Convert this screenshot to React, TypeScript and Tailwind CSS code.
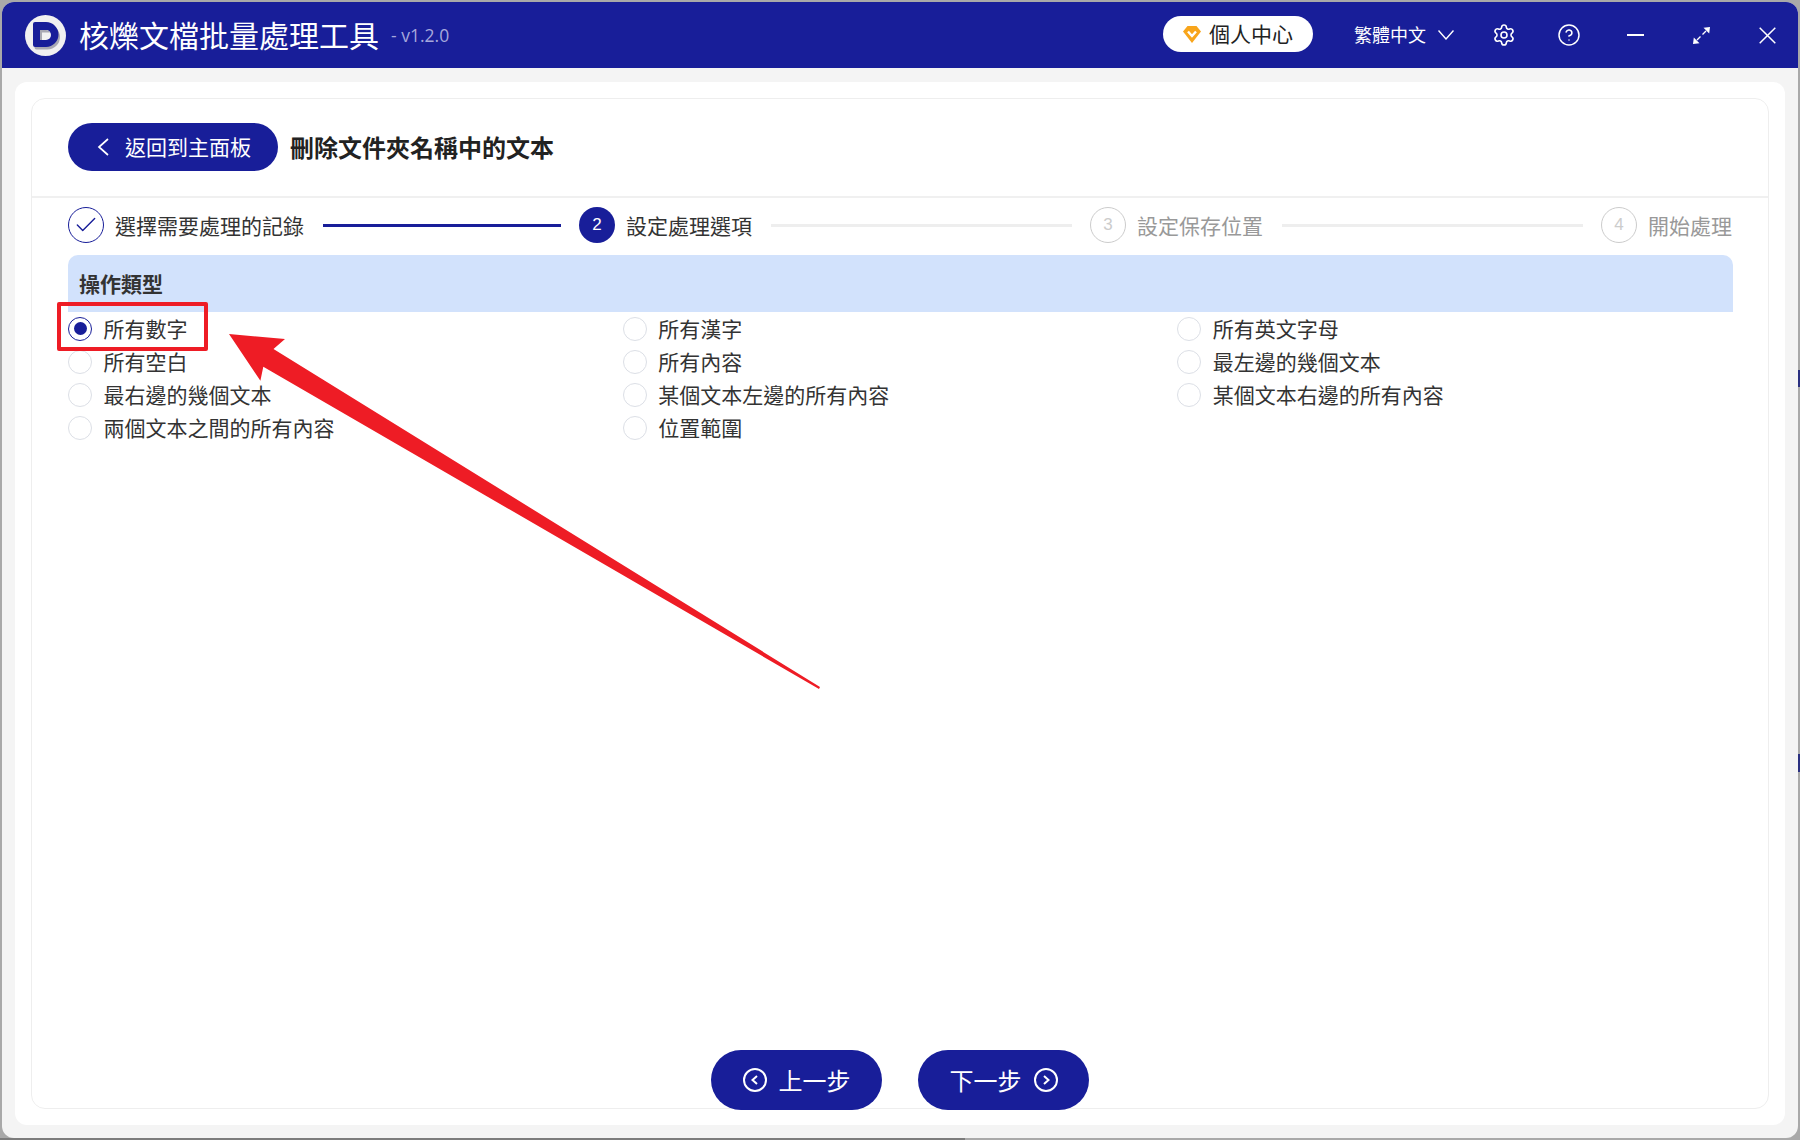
import { Settings, CircleHelp, Check } from "lucide-react";

const cjk = "font-['Noto_Sans_CJK_TC','Noto_Sans',sans-serif]";

const options = [
  "所有數字", "所有漢字", "所有英文字母",
  "所有空白", "所有內容", "最左邊的幾個文本",
  "最右邊的幾個文本", "某個文本左邊的所有內容", "某個文本右邊的所有內容",
  "兩個文本之間的所有內容", "位置範圍",
];

function Logo() {
  return (
    <svg width="41" height="41" viewBox="0 0 41 41">
      <circle cx="20.5" cy="20.5" r="20.5" fill="#f1f1f1" />
      <path d="M10 8h11a12.5 12.5 0 0 1 0 25H10a2 2 0 0 1-2-2V10a2 2 0 0 1 2-2z" fill="#a8a8b2" transform="translate(1.5 1.5)" />
      <path d="M10 7h11a12.5 12.5 0 0 1 0 25H10a2 2 0 0 1-2-2V9a2 2 0 0 1 2-2z" fill="#181e99" />
      <path d="M15 15h6a4.6 4.6 0 0 1 0 10h-6z" fill="#f1f1f1" />
      <path d="M15 15h6a4.6 4.6 0 0 1 4 2.4h-8v7.600h-2z" fill="#a8a8b2" />
    </svg>
  );
}

function Diamond() {
  return (
    <svg width="18" height="17" viewBox="0 0 18 17">
      <path d="M4.500 0h9L18 5.500 9 17 0 5.500z" fill="#f8a51b" />
      <path d="M5 5.500l4 4.500 4-4.500" fill="none" stroke="#fff" strokeWidth="2.4" />
    </svg>
  );
}

function Expand() {
  return (
    <svg width="17" height="17" viewBox="0 0 17 17" fill="none" stroke="#fff" strokeWidth="1.4">
      <path d="M17 0l-6.500.8 5.700 5.700z" fill="#fff" stroke="none" />
      <path d="M0 17l.8-6.500 5.700 5.700z" fill="#fff" stroke="none" />
      <path d="M13 4l-3.500 3.500M4 13l3.500-3.500" />
    </svg>
  );
}

function Close() {
  return (
    <svg width="17" height="17" viewBox="0 0 17 17" fill="none" stroke="#fff" strokeWidth="1.5">
      <path d="M.7.7l15.600 15.600M16.300.7L.7 16.300" />
    </svg>
  );
}

function CircleArrow({ right }: { right?: boolean }) {
  return (
    <svg width="24" height="24" viewBox="0 0 24 24" fill="none" stroke="#fff" strokeWidth="2">
      <circle cx="12" cy="12" r="11" />
      <path d={right ? "M10 8l4.500 4-4.500 4" : "M14 8l-4.500 4 4.500 4"} />
    </svg>
  );
}

function Step({ num, label, state }: { num: number; label: string; state: "done" | "active" | "todo" }) {
  return (
    <div className="flex items-center gap-[11px] shrink-0">
      {state === "done" && (
        <div className="w-9 h-9 rounded-full border border-[#181e99] flex items-center justify-center text-[#181e99]">
          <Check size={26} strokeWidth={1.3} />
        </div>
      )}
      {state === "active" && (
        <div className="w-9 h-9 rounded-full bg-[#181e99] text-white text-[17px] flex items-center justify-center font-['Liberation_Sans',sans-serif]">
          {num}
        </div>
      )}
      {state === "todo" && (
        <div className="w-9 h-9 rounded-full border border-[#cccccc] text-[#cccccc] text-[17px] flex items-center justify-center font-['Liberation_Sans',sans-serif]">
          {num}
        </div>
      )}
      <span className={state === "todo" ? "text-[21px] leading-none text-[#999999]" : "text-[21px] leading-none text-[#333333]"}>
        {label}
      </span>
    </div>
  );
}

function Radio({ label, checked }: { label: string; checked?: boolean }) {
  return (
    <label className="flex items-center h-[33px] gap-[11.5px]">
      {checked ? (
        <span className="w-6 h-6 rounded-full border border-[#181e99] flex items-center justify-center">
          <span className="w-[13px] h-[13px] rounded-full bg-[#181e99]" />
        </span>
      ) : (
        <span className="w-6 h-6 rounded-full border border-[#dcdfe6]" />
      )}
      <span className="text-[21px] leading-none text-[#333333]">{label}</span>
    </label>
  );
}

export default function App() {
  return (
    <div className={`${cjk} relative w-[1800px] h-[1140px] overflow-hidden bg-[#a9a9a9] pt-[2px] pl-[2px]`}>
      <div className="w-[1796px] h-[1136px] rounded-[12px] overflow-hidden bg-[#f4f4f4] flex flex-col">
        {/* Title bar */}
        <div className="h-[66px] shrink-0 bg-[#181e99] flex items-center text-white">
          <div className="ml-[23px]">
            <Logo />
          </div>
          <span className="ml-[13px] mb-[2px] text-[30px] leading-none">核爍文檔批量處理工具</span>
          <span className="ml-3 mt-[1px] text-[17.500px] leading-none text-[#a6a8dc] font-['Open_Sans',sans-serif]">- v1.2.0</span>
          <div className="ml-auto flex items-center">
            <div className="w-[150px] h-9 mb-[2px] rounded-full bg-white flex items-center pl-5 gap-2 text-[#222222] text-[21px] leading-none">
              <Diamond />
              <span className="mb-[1px]">個人中心</span>
            </div>
            <span className="ml-[41px] mb-[2px] text-[18px] leading-none">繁體中文</span>
            <svg className="ml-3" width="16" height="10" viewBox="0 0 16 10" fill="none" stroke="#fff" strokeWidth="1.4">
              <path d="M.5.5L8 9 15.500.5" />
            </svg>
            <Settings size={24} strokeWidth={1.6} className="ml-[38px]" />
            <CircleHelp size={24} strokeWidth={1.5} className="ml-[41px]" />
            <div className="ml-[46px] w-[17px] h-[2px] bg-white" />
            <div className="ml-[49px]">
              <Expand />
            </div>
            <div className="ml-[49px] mr-[22px]">
              <Close />
            </div>
          </div>
        </div>

        {/* Content */}
        <div className="flex-1 min-h-0 px-[13px] pt-[14px] pb-[13px]">
          <div className="h-full rounded-[12px] bg-white p-4">
            <div className="h-full rounded-[14px] border border-[#eeeeee] flex flex-col">
              <div className="h-[99px] shrink-0 border-b-2 border-[#f0f0f0] pl-9 flex items-center gap-[12px]">
                <button className="w-[210px] h-12 mb-[1px] rounded-full bg-[#181e99] text-white flex items-center pl-[29px] gap-[16px]">
                  <svg width="12" height="18" viewBox="0 0 12 18" fill="none" stroke="#fff" strokeWidth="1.7">
                    <path d="M11 1L2 9l9 8" />
                  </svg>
                  <span className="text-[21px] leading-none mb-[2px]">返回到主面板</span>
                </button>
                <span className="text-[24px] leading-none font-bold text-[#222222] mb-[1px]">刪除文件夾名稱中的文本</span>
              </div>

              <div className="flex-1 min-h-0 pl-9 pr-[35px] pt-[9px] flex flex-col">
                <div className="h-9 mr-[1px] flex items-center">
                  <Step num={1} label="選擇需要處理的記錄" state="done" />
                  <div className="w-[238px] h-[3px] bg-[#181e99] ml-[19px] mr-[18px]" />
                  <Step num={2} label="設定處理選項" state="active" />
                  <div className="flex-1 h-[3px] bg-[#eeeeee] ml-[19px] mr-[18px]" />
                  <Step num={3} label="設定保存位置" state="todo" />
                  <div className="flex-1 h-[3px] bg-[#eeeeee] ml-[19px] mr-[18px]" />
                  <Step num={4} label="開始處理" state="todo" />
                </div>

                <div className="mt-3 h-[57px] rounded-t-[10px] bg-[#d2e2fc] flex items-center pl-[11px] text-[21px] leading-none font-bold text-[#333333]">
                  操作類型
                </div>
                <div className="grid grid-cols-3 pr-[1px]">
                  {options.map((o, i) => (
                    <Radio key={o} label={o} checked={i === 0} />
                  ))}
                </div>

                <div className="mt-auto mb-[-2px] pr-[1px] flex justify-center gap-9">
                  <button className="w-[171px] h-[60px] rounded-full bg-[#181e99] text-white flex items-center justify-center gap-3">
                    <CircleArrow />
                    <span className="text-[24px] leading-none">上一步</span>
                  </button>
                  <button className="w-[171px] h-[60px] rounded-full bg-[#181e99] text-white flex items-center justify-center gap-3">
                    <span className="text-[24px] leading-none">下一步</span>
                    <CircleArrow right />
                  </button>
                </div>
              </div>
            </div>
          </div>
        </div>
      </div>

      {/* Desktop showing behind the window edge */}
      <div className="absolute right-0 top-[370px] w-[2px] h-[17px] bg-[#2a3080]" />
      <div className="absolute right-0 top-[754px] w-[2px] h-[18px] bg-[#2a3080]" />
      <div className="absolute left-0 bottom-0 w-[965px] h-[2px] bg-[#7c7c7c]" />

      {/* Annotation drawn over the screenshot */}
      <div className="absolute left-[57px] top-[302px] w-[151px] h-[49px] border-[4px] border-[#ee1c25] rounded-[2px]" />
      <svg className="absolute left-0 top-0 pointer-events-none" width="1800" height="1140">
        <polygon points="229,334 285,339 273.5,349 820,687 819,689 263.3,366.7 260.4,380.7" fill="#ee1c25" />
      </svg>
    </div>
  );
}
